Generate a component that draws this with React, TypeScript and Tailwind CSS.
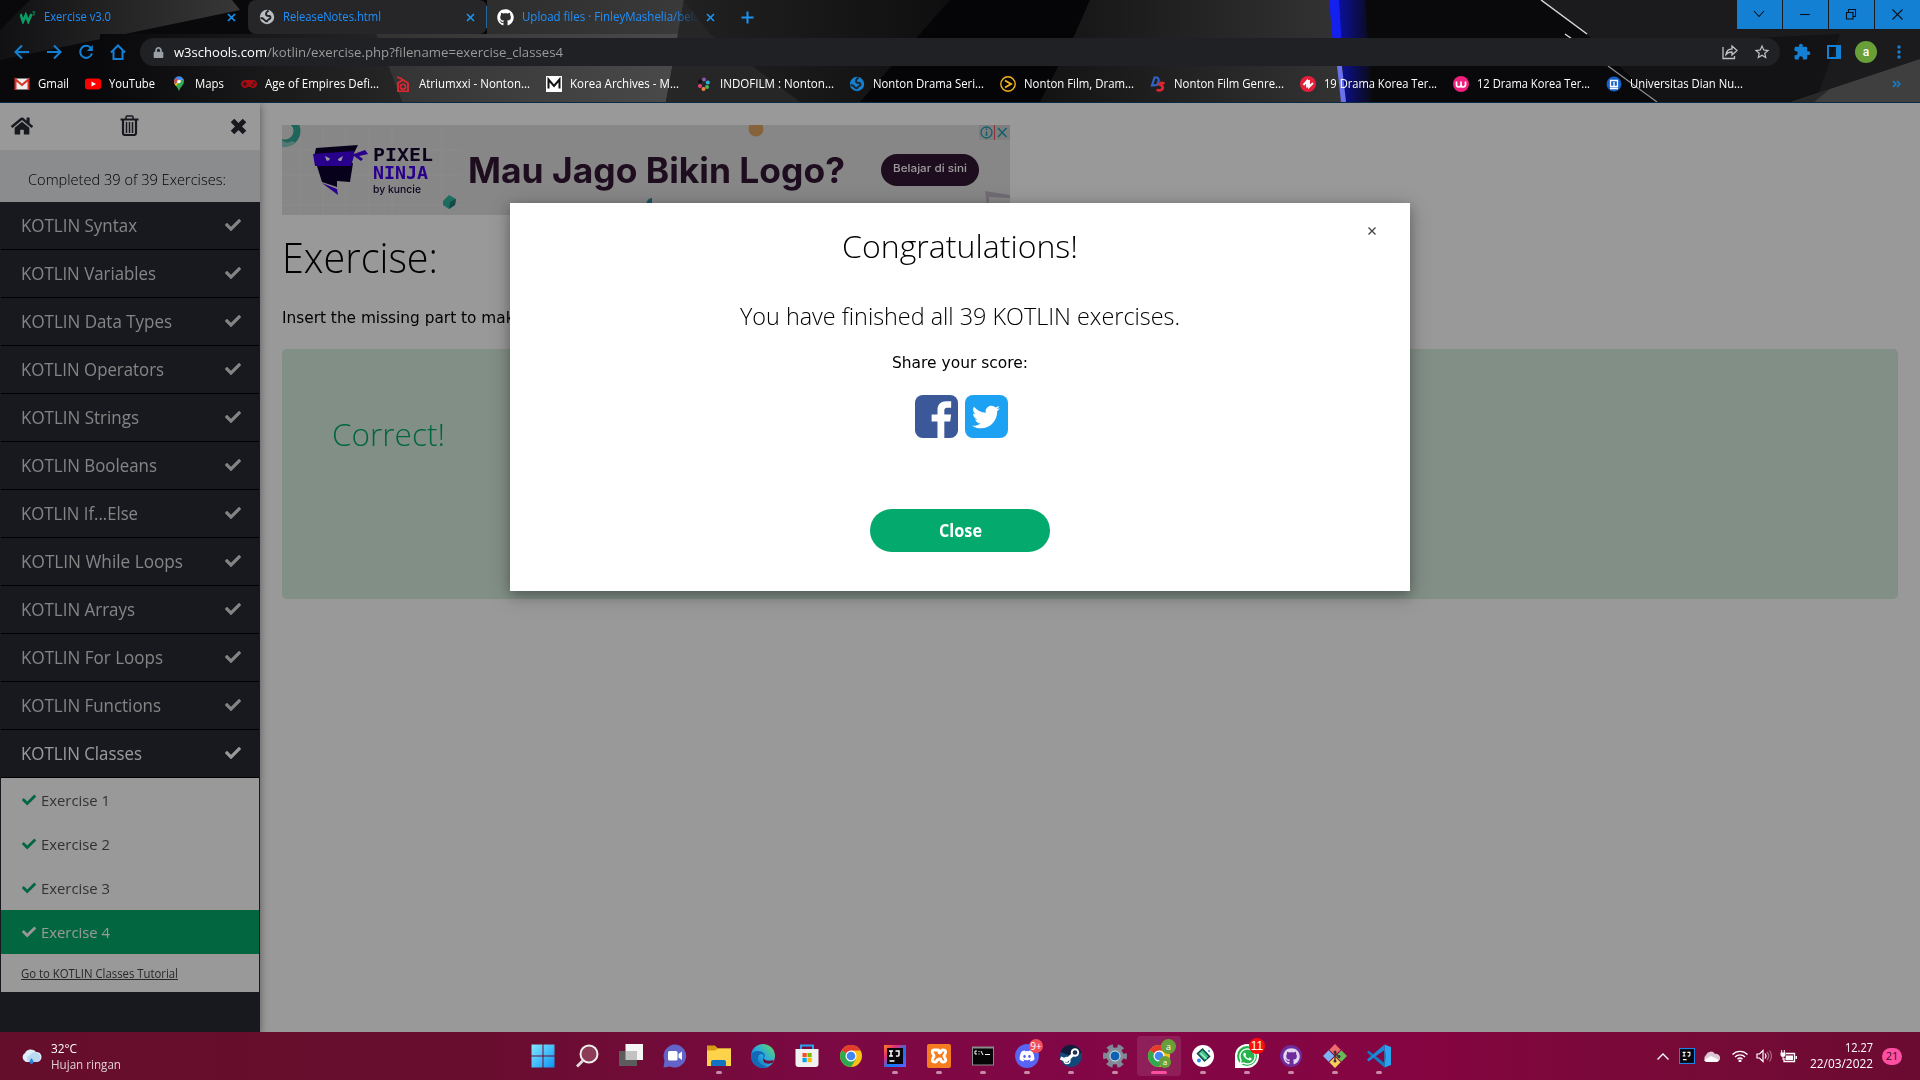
import React, { useLayoutEffect, useRef } from "react";
import { FaCheck, FaHome, FaTwitter, FaGithub, FaLock, FaDiscord, FaWhatsapp, FaGamepad } from "react-icons/fa";
import { MdExtension, MdStarBorder } from "react-icons/md";

/* Single line of text condensed or widened to a given pixel width. */
function Fit({ w, className = "", children }: { w: number; className?: string; children: React.ReactNode }) {
  const ref = useRef<HTMLSpanElement>(null);
  useLayoutEffect(() => {
    const el = ref.current;
    if (!el) return;
    el.style.transform = "none";
    el.style.transform = `scaleX(${w / el.getBoundingClientRect().width})`;
  }, [w]);
  return (
    <span className={`inline-block shrink-0 text-left ${className}`} style={{ width: w }}>
      <span ref={ref} className="inline-block origin-left whitespace-nowrap [text-decoration:inherit]">
        {children}
      </span>
    </span>
  );
}

const topics = [
  ["KOTLIN Syntax", 116],
  ["KOTLIN Variables", 135],
  ["KOTLIN Data Types", 151],
  ["KOTLIN Operators", 143],
  ["KOTLIN Strings", 118],
  ["KOTLIN Booleans", 136],
  ["KOTLIN If...Else", 117],
  ["KOTLIN While Loops", 162],
  ["KOTLIN Arrays", 114],
  ["KOTLIN For Loops", 142],
  ["KOTLIN Functions", 140],
  ["KOTLIN Classes", 121],
] as const;

function Wallpaper() {
  return (
    <svg className="absolute inset-0" width="1920" height="102" viewBox="0 0 1920 102" preserveAspectRatio="none">
      <defs>
        <linearGradient id="wpA" x1="0" x2="1">
          <stop offset="0" stopColor="#111113" />
          <stop offset="1" stopColor="#373737" />
        </linearGradient>
        <linearGradient id="wpB" x1="0" x2="1">
          <stop offset="0" stopColor="#333334" />
          <stop offset="1" stopColor="#4a4a4a" />
        </linearGradient>
        <linearGradient id="wpC" x1="0" x2="1">
          <stop offset="0" stopColor="#222" />
          <stop offset="1" stopColor="#050507" />
        </linearGradient>
        <linearGradient id="wpD" x1="0" x2="1">
          <stop offset="0" stopColor="#131313" />
          <stop offset="1" stopColor="#333" />
        </linearGradient>
        <linearGradient id="wpE" x1="0" x2="1">
          <stop offset="0" stopColor="#0b10a0" />
          <stop offset="1" stopColor="#0b0b12" />
        </linearGradient>
        <linearGradient id="wpF" x1="0" x2="1">
          <stop offset="0" stopColor="#09090b" />
          <stop offset="1" stopColor="#262627" />
        </linearGradient>
        <linearGradient id="wpG" x1="0" x2="1">
          <stop offset="0" stopColor="#2d2d2e" />
          <stop offset="1" stopColor="#3a3a3a" />
        </linearGradient>
      </defs>
      <rect width="1920" height="102" fill="#09090b" />
      <path d="M30 0H232L240 10 0 60V30Z" fill="url(#wpA)" />
      <path d="M100 34H376L402 102H100Z" fill="url(#wpF)" />
      <path d="M376 34H680L666 102H402Z" fill="url(#wpB)" />
      <path d="M487 0H684L680 34H487Z" fill="url(#wpG)" />
      <path d="M684 0H1090L1075 34 1040 102H666Z" fill="url(#wpC)" />
      <path d="M684 0L710 34 800 102H666Z" fill="#262627" />
      <path d="M950 0H1090L1040 102H860Z" fill="#050507" />
      <path d="M1090 0H1333L1345 102H1040L1075 34Z" fill="url(#wpD)" />
      <path d="M1338 0H1365L1372 102H1345Z" fill="url(#wpE)" />
      <path d="M1329 0H1339L1343 66H1335Z" fill="#1420f0" />
      <path d="M1337 66H1342L1346 102H1341Z" fill="#6a72ee" />
      <path d="M1541 0L1590 37 1657 102H1920V0Z" fill="#1b1b1d" />
      <path d="M1840 34L1815 102H1657L1600 45Z" fill="#131315" />
      <path d="M1791 102L1920 59V102Z" fill="#3f3f40" />
      <path d="M1791 102L1830 89 1814 102Z" fill="#29292a" />
      <path d="M1541 0L1587 34M1565 34L1572 39" stroke="#d8d8d8" strokeWidth="1.5" fill="none" />
      <path d="M1608 66L1657 102" stroke="#8c8c8c" strokeWidth="1.300" fill="none" />
    </svg>
  );
}

function Globe({ c = "#b9bcc0" }: { c?: string }) {
  return (
    <svg width="16" height="16" viewBox="0 0 16 16" className="shrink-0">
      <circle cx="8" cy="8" r="7.2" fill={c} />
      <path d="M9.500 1.500C8 3 7 3 7 5s1.500 2 3 2 2 1.500 1 2.500-2.500 1-3 3M1.500 9c2 0 3 .5 4 2s2 1.500 3 1.500" fill="none" stroke="#222428" strokeWidth="1.900" />
    </svg>
  );
}

function CloseTab() {
  return (
    <svg width="9" height="9" viewBox="0 0 9 9" className="shrink-0">
      <path d="M1 1l7 7M8 1L1 8" stroke="#1b94f3" strokeWidth="1.6" />
    </svg>
  );
}

function TabBar() {
  return (
    <div className="relative flex h-[34px] items-center text-[12px] text-[#1e90ff]">
      <div className="flex h-full w-[248px] items-center pl-5">
        <svg width="16" height="14" viewBox="0 0 16 14">
          <path d="M.5 4l2.500 7.500L5.800 5l2.500 6.500L11.500 4" fill="none" stroke="#0a9d67" strokeWidth="2.600" />
          <path d="M12.500 1.800h2.300l-1.200 1.600c1.600.2 1.400 2-.9 1.800" fill="none" stroke="#0a9d67" strokeWidth=".9" />
        </svg>
        <Fit w={67} className="ml-2">Exercise v3.0</Fit>
        <span className="ml-[116px] flex"><CloseTab /></span>
      </div>
      <div className="flex h-full w-[239px] items-center rounded-t-lg rounded-b-lg bg-[#262628] pl-[11px]">
        <Globe />
        <Fit w={98} className="ml-2">ReleaseNotes.html</Fit>
        <span className="ml-[85px] flex"><CloseTab /></span>
      </div>
      <div className="-ml-px h-[22px] w-px bg-[#24699f]" />
      <div className="flex h-full w-[245px] items-center pl-[10px]">
        <FaGithub size={17} color="#fff" />
        <div className="ml-[8px] w-[176px] overflow-hidden [mask-image:linear-gradient(to_right,#000_150px,transparent)]">
          <Fit w={178}>Upload files · FinleyMashelia/bela</Fit>
        </div>
        <span className="ml-[8px] flex"><CloseTab /></span>
      </div>
      <svg width="13" height="13" viewBox="0 0 13 13" className="ml-[9px]">
        <path d="M6.500 .5v12M.5 6.500h12" stroke="#1b94f3" strokeWidth="2" />
      </svg>
      <div className="ml-auto flex h-[29px] gap-px self-start">
        {[
          "M17 11l5 5.500 5-5.500",
          "M17 14.500h10",
          "M17.500 12.500h6.500v6.500h-6.500zM19.500 12.500v-3h7v7h-2.500",
          "M17.500 9.500l10 10M27.500 9.500l-10 10",
        ].map((d, i) => (
          <svg key={i} width="45" height="29" viewBox="0 0 45 29" className="bg-[#1480d3]">
            <path d={d} fill="none" stroke="#06121d" strokeWidth="1.1" />
          </svg>
        ))}
      </div>
    </div>
  );
}

function NavBar() {
  const s = { fill: "none", stroke: "#1480d3", strokeWidth: 2 };
  return (
    <div className="relative flex h-9 items-center">
      <div className="flex gap-4 pl-[14px]">
        <svg width="16" height="16" viewBox="0 0 16 16"><path d="M15 8H2M8 1.500L1.500 8 8 14.500" {...s} /></svg>
        <svg width="16" height="16" viewBox="0 0 16 16"><path d="M1 8h13M8 1.500L14.500 8 8 14.500" {...s} /></svg>
        <svg width="16" height="16" viewBox="0 0 16 16">
          <path d="M13 4.200A6 6 0 1 0 14 9.500" {...s} />
          <path d="M14.800 1v6h-6z" fill="#1480d3" />
        </svg>
        <svg width="16" height="16" viewBox="0 0 16 16"><path d="M1 8.500L8 1.500l7 7M3.500 7v8h9V7" {...s} /></svg>
      </div>
      <div className="ml-[14px] flex h-7 w-[1640px] items-center rounded-full bg-[#202124] pl-[13px] text-[13px]">
        <FaLock size={11} color="#9aa0a6" />
        <span className="ml-[10px] flex pt-px">
          <Fit w={93} className="text-white">w3schools.com</Fit>
          <Fit w={296} className="text-[#9a9a9a]">/kotlin/exercise.php?filename=exercise_classes4</Fit>
        </span>
        <svg width="16" height="16" viewBox="0 0 16 16" className="ml-auto" fill="none" stroke="#c0c1c3" strokeWidth="1.300">
          <path d="M1 3v11.500h11.500V12M4 10.500c.5-4 3-5.500 6-5.500V2l5 4.500-5 4.500V8C7.500 8 5.500 8.500 4 10.500z" />
        </svg>
        <MdStarBorder size={18} color="#c0c1c3" className="mr-[9px] ml-[15px]" />
      </div>
      <MdExtension size={18} color="#1480d3" className="ml-[13px]" />
      <svg width="14" height="14" viewBox="0 0 14 14" className="ml-4">
        <path d="M1 1h12v12H1z" fill="none" stroke="#1480d3" strokeWidth="2" />
        <path d="M9 1h4v12H9z" fill="#1480d3" />
      </svg>
      <div className="ml-[14px] flex h-[22px] w-[22px] items-center justify-center rounded-full bg-[#689f38] font-['Roboto'] text-[12px] font-medium text-white">a</div>
      <svg width="4" height="14" viewBox="0 0 4 14" className="ml-[20px]" fill="#1480d3">
        <circle cx="2" cy="2" r="1.700" /><circle cx="2" cy="7" r="1.700" /><circle cx="2" cy="12" r="1.700" />
      </svg>
    </div>
  );
}

const V = ({ children }: { children: React.ReactNode }) => (
  <svg width="16" height="16" viewBox="0 0 16 16" className="shrink-0">{children}</svg>
);

const bookmarks: [string, number, number, React.ReactNode][] = [
  ["Gmail", 31, 71, <V><path d="M1 2.500h14v11H1z" fill="#eee" /><path d="M1.500 14V3.500L8 9l6.500-5.500V14" fill="none" stroke="#d93025" strokeWidth="2" /></V>],
  ["YouTube", 46, 86, <V><rect y="2.500" width="16" height="11" rx="3" fill="#f00" /><path d="M6.500 5.500L11 8l-4.500 2.500z" fill="#fff" /></V>],
  ["Maps", 29, 70, <V><path d="M8 .5a5 5 0 0 1 5 5c0 4-4 5-5 10-1-5-5-6-5-10a5 5 0 0 1 5-5z" fill="#34a853" /><path d="M3 6a7 7 0 0 0 2 4l6-7-1-2z" fill="#fbbc04" /><path d="M8 .5a5 5 0 0 1 5 5L10.500 3 4 8 3 5a5 5 0 0 1 5-4.500" fill="#4285f4" /><path d="M4.500 2L7 4 4 8 3 5.500z" fill="#ea4335" /><circle cx="8" cy="5.500" r="1.800" fill="#fff" /></V>],
  ["Age of Empires Defi...", 114, 154, <FaGamepad size={16} color="#a60d12" className="shrink-0" />],
  ["Atriumxxi - Nonton...", 111, 151, <V><path d="M3 7v8.500h10V7L8 4 3 7zM2 1l4 1.500 3 2" fill="none" stroke="#e02730" strokeWidth="1.800" /><circle cx="8" cy="10.800" r="2.600" fill="none" stroke="#e02730" strokeWidth="1.600" /></V>],
  ["Korea Archives - M...", 109, 150, <V><path d="M0 0h16v16H0z" fill="#fff" /><path d="M2.500 12.500v-9L8 10l5.500-6.500v9" fill="none" stroke="#111" strokeWidth="2" /></V>],
  ["INDOFILM : Nonton...", 114, 153, <V><circle cx="8" cy="3.500" r="2" fill="#8a58b0" /><circle cx="11.800" cy="6.500" r="2" fill="#29b5d8" /><circle cx="11" cy="11" r="2" fill="#46b85a" /><circle cx="7.500" cy="13" r="2" fill="#f1813b" /><circle cx="4" cy="10" r="2" fill="#e6427e" /><circle cx="4" cy="5.500" r="2" fill="#111" /></V>],
  ["Nonton Drama Seri...", 111, 151, <Globe c="#167fd0" />],
  ["Nonton Film, Dram...", 110, 150, <V><circle cx="8" cy="8" r="7.200" fill="none" stroke="#f4b51a" strokeWidth="1.400" /><path d="M5 4.500l6 3.500-6 3.500" fill="none" stroke="#f4b51a" strokeWidth="1.900" /></V>],
  ["Nonton Film Genre...", 110, 150, <V><path d="M2 9.500L4.500 1.500H7Q10.500 3 7 9z" fill="none" stroke="#2f62c5" strokeWidth="2.200" /><path d="M14.500 7.500q-5-1.500-5 1 4 1.500 3 4t-6 1.500" fill="none" stroke="#dd2631" strokeWidth="2.800" /></V>],
  ["19 Drama Korea Ter...", 113, 153, <V><circle cx="8" cy="8" r="8" fill="#e31f3b" /><path d="M3.500 9L7 5v6.500M9 4v7l4-4" fill="none" stroke="#fff" strokeWidth="1.900" /></V>],
  ["12 Drama Korea Ter...", 113, 153, <V><circle cx="8" cy="8" r="8" fill="#f01f7c" /><path d="M3.500 5.500v3q0 2.500 2.200 2.500T8 8.500v-3 3q0 2.500 2.200 2.500t2.300-2.500v-3" fill="none" stroke="#fff" strokeWidth="1.700" /></V>],
  ["Universitas Dian Nu...", 113, 153, <V><circle cx="8" cy="8" r="7.500" fill="#1660c9" /><path d="M4.500 4.500h7v6h-7zM4 12.500h8M8 6v4" fill="none" stroke="#fff" strokeWidth="1.300" /></V>],
];

function BookmarkBar() {
  return (
    <div className="relative flex h-7 items-center pl-[14px] text-[12px] text-white">
      {bookmarks.map(([label, w, cell, icon]) => (
        <div key={label} className="flex shrink-0 items-center gap-2" style={{ width: cell }}>
          {icon}
          <Fit w={w}>{label}</Fit>
        </div>
      ))}
      <svg width="9" height="8" viewBox="0 0 9 8" className="mr-[19px] ml-auto">
        <path d="M1 1l3 3-3 3M5 1l3 3-3 3" fill="none" stroke="#1480d3" strokeWidth="1.500" />
      </svg>
    </div>
  );
}

function Sidebar() {
  return (
    <aside className="relative flex w-[260px] shrink-0 flex-col bg-[#282a35] shadow-[0_2px_8px_rgba(0,0,0,0.45)]">
      <div className="flex h-[47px] items-center justify-between bg-white pr-[13px] pb-px pl-[11px] text-[#282a35]">
        <FaHome size={22} />
        <svg width="19" height="21" viewBox="0 0 19 21" className="mr-1 mb-px" fill="none" stroke="currentColor">
          <path d="M.5 4.500h18" strokeWidth="2" />
          <path d="M6 4V2q0-1 1-1h5q1 0 1 1v2" strokeWidth="1.500" />
          <path d="M3 5v13q0 2 2 2h9q2 0 2-2V5" strokeWidth="2.200" />
          <path d="M6.500 7v11M9.500 7v11M12.500 7v11" strokeWidth="1.500" />
        </svg>
        <svg width="17" height="17" viewBox="0 0 17 17" className="mt-px"><path d="M2.500 2.500l12 12M14.500 2.500l-12 12" stroke="currentColor" strokeWidth="5" /></svg>
      </div>
      <div className="flex h-[52px] items-center bg-[#e7e9eb] pt-[6px] pl-7 text-[15px] font-[350] text-black">
        <Fit w={198}>Completed 39 of 39 Exercises:</Fit>
      </div>
      <nav className="px-px">
        {topics.map(([t, w], i) => (
          <div
            key={t}
            className={`flex h-12 items-center justify-between border-b border-black pr-[18px] pl-5 text-[18px] ${i === 11 ? "text-white" : "text-[#dcdcdc]"}`}
          >
            <Fit w={w}>{t}</Fit>
            <FaCheck size={16} className="mb-px" />
          </div>
        ))}
        <div className="bg-white text-[15px] text-[#555]">
          {[1, 2, 3, 4].map((n) => (
            <div key={n} className={`flex h-11 items-center pl-[21px] ${n === 4 ? "bg-[#04aa6d] text-white" : ""}`}>
              <FaCheck size={14} className={n === 4 ? "text-white" : "text-[#04aa6d]"} />
              <Fit w={69} className="ml-[5px]">{`Exercise ${n}`}</Fit>
            </div>
          ))}
          <div className="flex h-[38px] items-center pt-[2px] pl-5 text-[12px] text-[#444]">
            <Fit w={157} className="underline">Go to KOTLIN Classes Tutorial</Fit>
          </div>
        </div>
      </nav>
    </aside>
  );
}

function AdBanner() {
  return (
    <div className="relative flex h-[90px] w-[728px] items-center overflow-hidden bg-[#e2e1e1]">
      <svg className="absolute inset-0" width="728" height="90" viewBox="0 0 728 90">
        <path d="M0 25h180M0 50h180M0 80h180M18 0v90M41 0v90M64 0v90M87 0v90M110 0v90M160 0v90" stroke="#e9e9e8" strokeWidth="1" />
        <circle cx="3" cy="6" r="12" fill="none" stroke="#36a898" strokeWidth="7" />
        <path d="M0 15q4 5 10 1l4 2q-6 4-14 4z" fill="#8fc9c3" />
        <path d="M161 76l6-6 7 4-1 6-6 4-6-4z" fill="#2fb59f" />
        <path d="M167 84l6-4 1-6-6 3z" fill="#1f7d74" />
        <circle cx="474" cy="4" r="7.500" fill="#e0a561" />
        <path d="M364 80q1-7 6-7v8z" fill="#2a8ea5" />
        <path d="M703 66l25 4v3l-21-1v8h-2z" fill="#bdb5c5" />
        <g>
          <path d="M34 23l42-3-4 8-40 4z" fill="#0e0230" />
          <path d="M34 38h37l-3 19-13-1v6L40 57z" fill="#0e0230" />
          <path d="M31 29l41-3v3l11-4 3 4-9 2 4 3-2 2-7-5-3 10H33z" fill="#4400ea" />
          <path d="M43 31l5 2.500q-1 3-3.500 2zM61 31l-5 3q0 3 3.500 1.500z" fill="#fff" />
          <path d="M40 58l15 6 1 6z" fill="#4400ea" />
        </g>
      </svg>
      <div className="relative ml-[91px] flex w-[95px] flex-col pt-px font-['DejaVu_Sans_Mono'] font-bold leading-none">
        <Fit w={60} className="h-[18px] text-[18px] text-[#150635]">PIXEL</Fit>
        <Fit w={55} className="h-[20px] text-[18px] text-[#4400ea]">NINJA</Fit>
        <Fit w={48} className="h-[12px] font-['Inter'] text-[11px] font-medium text-[#150635]">by kuncie</Fit>
      </div>
      <Fit w={377} className="relative font-['Inter'] text-[35px] font-bold leading-none text-[#321733]">Mau Jago Bikin Logo?</Fit>
      <div className="relative ml-[36px] flex h-8 w-[98px] items-center justify-center rounded-full bg-[#321733] pb-1 font-['Inter'] text-[11px] font-medium text-white">
        <Fit w={74}>Belajar di sini</Fit>
      </div>
      <svg className="absolute top-0 right-0 bg-[#d3d3d3]" width="31" height="15" viewBox="0 0 31 15" fill="none" stroke="#1ba0b7" strokeWidth="1.300">
        <circle cx="7.500" cy="7.500" r="5.500" />
        <path d="M7.500 6.500v4.500M7.500 3.500v1.500M19 3l8.500 9M27.500 3L19 12" strokeWidth="1.500" />
        <path d="M15.500 0v15" stroke="#e8555e" strokeWidth="1" />
      </svg>
    </div>
  );
}

function Modal() {
  return (
    <div className="absolute top-[100px] left-[510px] flex h-[388px] w-[900px] flex-col items-center bg-white text-black shadow-[0_4px_10px_rgba(0,0,0,0.2),0_4px_20px_rgba(0,0,0,0.25)]">
      <svg className="absolute top-[24px] right-[34px]" width="8" height="8" viewBox="0 0 8 8">
        <path d="M.5 .5l7 7M7.500 .5l-7 7" stroke="#444" strokeWidth="1.300" />
      </svg>
      <Fit w={236} className="mt-[21px] h-11 text-[32px] leading-[44px] font-[350]">Congratulations!</Fit>
      <Fit w={440} className="mt-[32px] h-8 text-[24px] leading-8 font-[350]">You have finished all 39 KOTLIN exercises.</Fit>
      <Fit w={136} className="mt-[21px] h-5 font-['DejaVu_Sans'] text-[15px] leading-5">Share your score:</Fit>
      <div className="mt-[22px] flex gap-[7px] pl-[2px]">
        <svg width="43" height="43" viewBox="0 0 44 44">
          <rect width="44" height="44" rx="8" fill="#3b5998" />
          <path d="M23 44V27h-6v-7h6v-4.500C23 9.500 26.500 6.500 32 6.500h5V13h-3.500c-3 0-3.500 1.300-3.500 3.500V20h7l-1 7h-6v17z" fill="#fff" />
        </svg>
        <div className="flex h-[43px] w-[43px] items-center justify-center rounded-lg bg-[#1da1f2]">
          <FaTwitter size={28} color="#fff" />
        </div>
      </div>
      <div className="mt-[71px] flex h-[43px] w-[180px] items-center justify-center rounded-full bg-[#04aa6d] text-[17px] font-bold text-white">
        <Fit w={43}>Close</Fit>
      </div>
    </div>
  );
}

const I = ({ children }: { children: React.ReactNode }) => (
  <svg width="24" height="24" viewBox="0 0 24 24">{children}</svg>
);

function Chrome() {
  return (
    <I>
      <circle cx="12" cy="12" r="11" fill="#fbc116" />
      <path d="M12 12L2.500 6.500A11 11 0 0 1 21.500 6.500H12z" fill="#e33b2e" />
      <path d="M2.500 6.500A11 11 0 0 0 12 23l5-8-5-3z" fill="#2da94f" />
      <circle cx="12" cy="12" r="5.500" fill="#fff" />
      <circle cx="12" cy="12" r="4.300" fill="#4285f4" />
    </I>
  );
}

function Intellij({ tray = false }: { tray?: boolean }) {
  return (
    <svg width={tray ? 16 : 22} height={tray ? 16 : 22} viewBox="0 0 22 22">
      <defs>
        <linearGradient id="ijg" x1="0" y1="0" x2="1" y2="1">
          <stop offset="0" stopColor="#fc801d" /><stop offset=".3" stopColor="#e52c77" /><stop offset=".6" stopColor="#087cfa" /><stop offset="1" stopColor="#6b57ff" />
        </linearGradient>
      </defs>
      <path d="M0 0h22v22H0z" fill={tray ? "#1a82e8" : "url(#ijg)"} />
      <path d={tray ? "M1.500 1.500h19v19h-19z" : "M3 3h16v16H3z"} fill="#08060a" />
      <path d="M5 6h4M7 6v5M5 11h4M11.500 6H15v4q0 1.500-3 1M5.500 16h5" fill="none" stroke="#fff" strokeWidth="1.500" />
    </svg>
  );
}

const apps: { icon: React.ReactNode; run?: boolean; active?: boolean; badge?: string }[] = [
  { icon: <I><defs><linearGradient id="wg" x1="0" y1="0" x2="1" y2="1"><stop offset="0" stopColor="#82eaff" /><stop offset="1" stopColor="#0c93f5" /></linearGradient></defs><path d="M.5 .5H11.500V11.500H.5zM12.500 .5h11v11h-11zM.5 12.500h11v11H.5zM12.500 12.500h11v11h-11z" fill="url(#wg)" /></I> },
  { icon: <I><circle cx="14" cy="10" r="8.500" fill="#8d3c58" stroke="#eee" strokeWidth="2" /><path d="M8 16.500l-6 6" stroke="#ddd" strokeWidth="2.800" /></I> },
  { icon: <I><path d="M6.500 0h18v16h-18z" fill="#f5f5f5" /><path d="M0 7h18v15H0z" fill="#5c5c5c" /><path d="M6.500 7H18v9H6.500z" fill="#c2c2c2" /></I> },
  { icon: <I><path d="M12 .5a11.500 11.500 0 1 1-5 22L.5 23.500l1-7A11.500 11.500 0 0 1 12 .5z" fill="#6264c8" /><rect x="5" y="7" width="9.500" height="9.500" rx="1.500" fill="#fff" /><path d="M15.500 10l3.500-2.500v8.500l-3.500-2.500z" fill="#fff" /></I> },
  { icon: <I><path d="M0 1.500h8l3 3h13V20H0z" fill="#d69d14" /><path d="M0 6.500h8l3-2h13V22H0z" fill="#fcd34b" /><path d="M4 22v-4q0-2 2-2h11q2 0 2 2v4z" fill="#1273c4" /></I>, run: true },
  { icon: <I><defs><linearGradient id="eg" x1="0" y1="1" x2="1" y2="0"><stop offset="0" stopColor="#0c59a4" /><stop offset=".5" stopColor="#2aa8e0" /><stop offset="1" stopColor="#63df55" /></linearGradient></defs><circle cx="12" cy="12" r="12" fill="url(#eg)" /><path d="M0 12C1 8 4 7 7 7c5 0 7 3 7 5.500l-2 1.500c2-4-2-5-4-3-3 4 0 10 7 11-3 4-15 1-15-10z" fill="#1169b8" /><path d="M12.500 13.500c0 3 5 4 10 2.500L22.500 18c-3 2.500-12 3-10-4.500z" fill="#750b3b" /></I> },
  { icon: <I><path d="M6 5V1.500h12V5" fill="none" stroke="#27a4ea" strokeWidth="2" /><path d="M.5 5h23v15q0 3-3 3h-17q-3 0-3-3z" fill="#f1f1f1" /><path d="M7.500 9h4.200v4.200H7.500z" fill="#f25022" /><path d="M12.500 9h4.200v4.200h-4.200z" fill="#7fba00" /><path d="M7.500 14h4.200v4.200H7.500z" fill="#00a4ef" /><path d="M12.500 14h4.200v4.200h-4.200z" fill="#ffb900" /></I> },
  { icon: <Chrome /> },
  { icon: <Intellij />, run: true },
  { icon: <I><rect width="24" height="24" rx="2" fill="#f57c1f" /><path d="M7 6h4q1 0 1 2t2 0q0-2 2-2 4 0 2 4-2 2 0 4 2 4-2 4-2 0-2-2t-4 0q0 2-2 2-4 0-2-4 2-2 0-4-2-4 1-4z" fill="none" stroke="#fff" strokeWidth="2.800" /></I>, run: true },
  { icon: <I><path d="M1 2.500h22v19H1z" fill="#8b8b8b" /><path d="M2 4.500h20v16H2z" fill="#050505" /><path d="M6 7H4v3h2M8 7v1m0 1.500v1M10 7l2 4M14 10.500h5" fill="none" stroke="#fff" /></I>, run: true },
  { icon: <div className="flex h-6 w-6 items-center justify-center rounded-full bg-[#5865f2]"><FaDiscord size={16} color="#fff" /></div>, run: true, badge: "9+" },
  { icon: <I><circle cx="12" cy="12" r="11" fill="#14487a" /><path d="M1.500 8A11 11 0 0 1 22.500 9L12 12z" fill="#101a3c" /><path d="M1.500 14l6 2.500L15 9.500" fill="none" stroke="#fff" strokeWidth="3.500" /><circle cx="8" cy="16.500" r="3" fill="none" stroke="#fff" strokeWidth="1.300" /><circle cx="16" cy="8.500" r="4.200" fill="#fff" /><circle cx="16" cy="8.500" r="2.300" fill="#1b3256" /></I>, run: true },
  { icon: <I><circle cx="12" cy="12" r="10" fill="none" stroke="#7e8994" strokeWidth="4" strokeDasharray="6 4.470" strokeDashoffset="3" /><circle cx="12" cy="12" r="8.500" fill="#858f99" /><circle cx="12" cy="12" r="5" fill="#0f62b0" stroke="#d9e3ec" /></I>, run: true },
  { icon: <Chrome />, active: true },
  { icon: <I><circle cx="12" cy="12" r="11" fill="#fff" /><path d="M6.500 9.500l5-4.500 7 7.500-5 4.500z" fill="#39c28d" stroke="#144441" strokeWidth="1.500" /><path d="M9.500 9l6 6" stroke="#a8efd2" strokeWidth="1.500" /><circle cx="8" cy="16.500" r="2" fill="#2d8cf0" /><circle cx="18" cy="7" r="1" fill="#2d8cf0" /></I>, run: true },
  { icon: <div className="flex h-6 w-6 items-center justify-center rounded-full rounded-bl-none bg-white"><div className="flex h-5 w-5 items-center justify-center rounded-full bg-[#25b34b]"><FaWhatsapp size={19} color="#fff" /></div></div>, run: true, badge: "11" },
  { icon: <div className="flex h-[22px] w-[22px] items-center justify-center rounded-full bg-[#6e2c9d]"><FaGithub size={17} color="#e5d5ee" /></div>, run: true },
  { icon: <I><g transform="rotate(45 12 12)"><path d="M3.500 3.500h8v8h-8z" fill="#ef6b6b" /><path d="M12.500 3.500h8v8h-8z" fill="#64bb55" /><path d="M3.500 12.500h8v8h-8z" fill="#7fb2f4" /><path d="M12.500 12.500h8v8h-8z" fill="#f7cf5a" /></g><path d="M12 7v10M12 9l4 4" stroke="#4b2835" strokeWidth="1.300" /><circle cx="12" cy="17" r="1.500" fill="#4b2835" /><circle cx="12" cy="8" r="1.500" fill="#4b2835" /><circle cx="16" cy="12.500" r="1.500" fill="#4b2835" /></I>, run: true },
  { icon: <I><path d="M17.500 .5L24 3v18l-6.500 2.500z" fill="#2ba3ee" /><path d="M17.500 5v14L1.500 6.500 0 8.500l17.500 15L19 12z" fill="#1479bd" /><path d="M17.500 .5L0 15.500l1.500 2 16-11.500z" fill="#1a8ad6" /></I>, run: true },
];

function Taskbar() {
  return (
    <footer className="relative flex h-12 items-center bg-[linear-gradient(90deg,#650e2b_0%,#680d2e_25%,#7b0943_43%,#830646_58%,#840540_75%,#760a37_88%,#6b0b30_100%)] text-[12px] text-white">
      <div className="flex w-[521px] items-center pt-px pl-5">
        <svg width="23" height="17" viewBox="0 0 23 17">
          <path d="M6 14a5 5 0 0 1-1-9 6.500 6.500 0 0 1 11-1 5 5 0 0 1 1 10z" fill="#dfeefb" />
          <path d="M9 14a5 4 0 0 1 1-7 5 5 0 0 1 7-2 4.700 4.700 0 0 1 0 9z" fill="#b9d9f2" />
          <path d="M11.500 10q4 5 0 6-4-1 0-6" fill="#2f83dd" />
        </svg>
        <div className="ml-2 flex flex-col">
          <Fit w={26} className="h-4 leading-4">32°C</Fit>
          <Fit w={70} className="h-4 leading-4 text-white/80">Hujan ringan</Fit>
        </div>
      </div>
      <div className="flex h-full items-center">
        {apps.map((a, i) => (
          <div key={i} className={`relative flex h-10 w-11 items-center justify-center ${a.active ? "rounded bg-white/10" : ""}`}>
            {a.icon}
            {a.run && <div className="absolute bottom-[2px] left-[19px] h-[3px] w-[6px] rounded-full bg-[#c98aa8]" />}
            {a.active && (
              <>
                <div className="absolute bottom-[2px] left-[14px] h-[3px] w-4 rounded-full bg-[#ff4fa0]" />
                <div className="absolute top-[3px] left-[24px] flex h-[15px] w-[15px] items-center justify-center rounded-full bg-[#689f38] text-[9px]">a</div>
                <div className="absolute top-[20px] left-[22px] flex h-3 w-3 items-center justify-center rounded-full bg-[#689f38] text-[8px] leading-none">a</div>
              </>
            )}
            {a.badge && (
              <div className={`absolute left-[24px] flex items-center justify-center rounded-full leading-none ${a.badge === "11" ? "top-[2px] h-4 w-4 bg-[#fb0d0d] font-['Liberation_Sans'] text-[12px]" : "top-[3px] h-[14px] w-[14px] bg-[#f04f58] text-[10px]"}`}>
                {a.badge}
              </div>
            )}
          </div>
        ))}
      </div>
      <div className="ml-auto flex items-center">
        <svg width="12" height="7" viewBox="0 0 12 7"><path d="M.5 6.500L6 1l5.500 5.500" fill="none" stroke="#fff" strokeWidth="1.300" /></svg>
        <span className="ml-[10px]"><Intellij tray /></span>
        <svg width="17" height="11" viewBox="0 0 17 11" className="ml-2"><path d="M4 11a4 4 0 0 1-1-7 5 5 0 0 1 9-1 4 4 0 0 1 2 8z" fill="#ddc6d1" /><path d="M1 9l7-4 8 4q-1 2-3 2H4q-2 0-3-2z" fill="#fff" /></svg>
        <svg width="16" height="12" viewBox="0 0 16 12" className="ml-3" fill="none" stroke="#fff" strokeWidth="1.400"><path d="M.5 4.500a10.500 10.500 0 0 1 15 0M3 7a7 7 0 0 1 10 0M5.500 9.300a3.600 3.600 0 0 1 5 0" /><circle cx="8" cy="11" r=".8" fill="#fff" /></svg>
        <svg width="17" height="14" viewBox="0 0 17 14" className="ml-2" fill="none" stroke="#fff" strokeWidth="1.200"><path d="M1 5h2.500L7 1.500v11L3.500 9H1zM9 4.500q2 2.500 0 5" /><path d="M11 3q3.500 4 0 8M13.500 1.500q4 5.500 0 11" opacity=".4" /></svg>
        <svg width="17" height="13" viewBox="0 0 17 13" className="ml-[7px]"><path d="M6 3.500h8.500v8H4V8" fill="none" stroke="#fff" strokeWidth="1.300" /><path d="M6 5.500h7v4.500H5.500V8zM15.500 6H17v3h-1.500zM.5 2.500h5v2.500q0 2-2.500 2t-2.500-2zM1.200 0h1v2.500h-1zM3.800 0h1v2.500h-1zM2.500 7h1v3h-1z" fill="#fff" /></svg>
        <div className="ml-[13px] flex w-[63px] flex-col items-end">
          <Fit w={28} className="h-4 leading-4">12.27</Fit>
          <Fit w={63} className="h-4 leading-4">22/03/2022</Fit>
        </div>
        <div className="mr-[18px] ml-[9px] flex h-[17px] w-5 items-center justify-center rounded-full bg-[#ff4fa3] text-[11px] text-[#3a0a22]">21</div>
      </div>
    </footer>
  );
}

export default function App() {
  return (
    <div className="flex h-[1080px] w-[1920px] flex-col overflow-hidden bg-black font-['Open_Sans','Noto_Sans',sans-serif]">
      <header className="relative h-[103px] shrink-0 border-b border-[#0a2b47]">
        <Wallpaper />
        <TabBar />
        <NavBar />
        <BookmarkBar />
      </header>
      <div className="relative flex h-[929px] shrink-0 overflow-hidden bg-white">
        <Sidebar />
        <main className="flex-1 pt-[22px] pr-[22px] pl-[22px] text-black">
          <AdBanner />
          <h1 className="mt-[12px] h-[60px] text-[42px] leading-[60px] font-[350]">
            <Fit w={156}>Exercise:</Fit>
          </h1>
          <p className="mt-[21px] h-5 font-['DejaVu_Sans'] text-[15px] leading-5">
            <Fit w={338}>Insert the missing part to make it complete.</Fit>
          </p>
          <section className="mt-[21px] h-[250px] rounded-[5px] bg-[#d9eee1] pt-[63px] pl-[50px] text-[32px] leading-[44px] font-[350] text-[#04aa6d]">
            <Fit w={113}>Correct!</Fit>
          </section>
        </main>
        <div className="absolute inset-0 bg-black/40" />
        <Modal />
      </div>
      <Taskbar />
    </div>
  );
}
